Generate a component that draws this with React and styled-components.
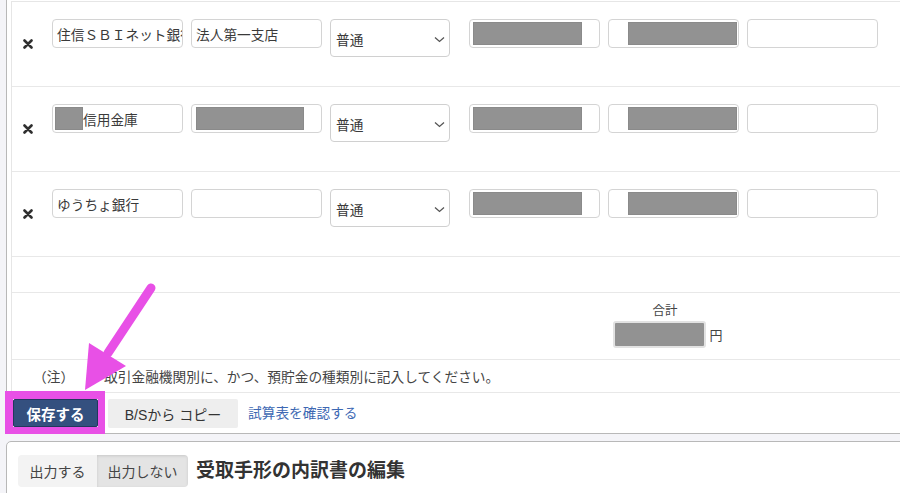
import styled, { createGlobalStyle } from "styled-components";

const GlobalStyle = createGlobalStyle`
  * { box-sizing: border-box; }
  html, body { margin: 0; padding: 0; }
  body {
    width: 900px;
    height: 493px;
    overflow: hidden;
    background: #f4f4f8;
    font-family: "Liberation Sans", "Noto Sans CJK JP", sans-serif;
    color: #333;
  }
`;

const Page = styled.div`
  position: relative;
  width: 1000px;
  padding-left: 6px;
`;

const Panel = styled.section`
  background: #fff;
  border: 1px solid #b8b8b8;
  border-top: none;
  border-radius: 0 0 4px 4px;
  padding: 1px 0 0 4px;
`;

const Table = styled.div`
  border-top: 1px solid #e6e6e6;
  border-left: 1px solid #e6e6e6;
`;

const Row = styled.div`
  display: flex;
  align-items: center;
  height: ${(p) => p.$h}px;
  border-bottom: 1px solid #e8e8e8;
`;

const XCell = styled.div`
  width: 32px;
  display: flex;
  justify-content: center;
  align-self: center;
`;

const Fields = styled.div`
  display: flex;
  align-items: flex-start;
  gap: 8px;
  align-self: flex-start;
  margin: 17px 0 0 8px;
`;

const Field = styled.div`
  width: ${(p) => p.$w || 131}px;
  height: 29px;
  flex-shrink: 0;
  display: flex;
  align-items: center;
  padding-left: ${(p) => (p.$pad ?? 4)}px;
  border: 1px solid #d4d4d4;
  border-radius: 4px;
  background: #fff;
  font-size: 13.7px;
  color: #3a3a3a;
  white-space: nowrap;
  overflow: hidden;
`;

const Redacted = styled.span`
  display: block;
  flex-shrink: 0;
  width: ${(p) => p.$w}px;
  height: 23px;
  background: #929292;
  box-shadow: inset 0 0 0 1px #8a8a8a;
`;

const Select = styled.div`
  width: 120px;
  height: 38px;
  margin-right: 11px;
  flex-shrink: 0;
  display: flex;
  align-items: center;
  justify-content: space-between;
  padding: 2px 4px 0 5px;
  border: 1px solid #d0d0d0;
  border-radius: 4px;
  background: #fff;
  font-size: 13.7px;
  color: #3a3a3a;
`;

const TotalCell = styled.div`
  width: 140px;
  margin-left: 586px;
  align-self: flex-start;
  padding-top: 10px;
  display: flex;
  flex-direction: column;
  align-items: center;
`;

const TotalLabel = styled.div`
  font-size: 12.5px;
  line-height: 16px;
  color: #444;
  margin-right: 6px;
`;

const TotalLine = styled.div`
  display: flex;
  align-items: center;
  gap: 3px;
  margin-top: 2px;
  font-size: 13px;
  color: #444;
`;

const TotalBox = styled.div`
  width: 93px;
  height: 27px;
  border: 2px solid #e2e2e2;
  border-radius: 3px;
  background: #929292;
`;

const NoteMark = styled.span`
  margin-left: 21px;
  font-size: 13.7px;
  color: #444;
`;

const NoteText = styled.span`
  margin-left: 30px;
  font-size: 13.7px;
  color: #444;
`;

const Actions = styled.div`
  height: 40px;
  display: flex;
  align-items: flex-start;
  gap: 10px;
  padding: 6px 0 0 2px;
`;

const SaveButton = styled.button`
  width: 85px;
  height: 28px;
  border: 1px solid #22385d;
  border-radius: 2px;
  background: #34507f;
  color: #fff;
  font: bold 14.5px "Liberation Sans", "Noto Sans CJK JP", sans-serif;
  padding: 0;
`;

const CopyButton = styled.button`
  width: 130px;
  height: 29px;
  border: none;
  border-radius: 2px;
  background: #eeeeee;
  color: #333;
  font: 14px "Liberation Sans", "Noto Sans CJK JP", sans-serif;
  padding: 0;
`;

const TextLink = styled.a`
  line-height: 29px;
  font-size: 13.7px;
  color: #3d68b3;
  text-decoration: none;
`;

const NextPanel = styled.section`
  margin-top: 7px;
  height: 90px;
  background: #fff;
  border: 1px solid #b8b8b8;
  border-radius: 5px;
  padding: 13px 0 0 11px;
  display: flex;
  align-items: flex-start;
`;

const Toggle = styled.div`
  display: flex;
  height: 32px;
  border-radius: 4px;
  overflow: hidden;
`;

const ToggleItem = styled.div`
  width: ${(p) => p.$w}px;
  display: flex;
  align-items: center;
  justify-content: center;
  font-size: 14px;
  color: #444;
  background: ${(p) => (p.$active ? "#e4e4e4" : "#f3f3f3")};
  box-shadow: ${(p) => (p.$active ? "inset 0 1px 3px rgba(0,0,0,0.12)" : "none")};
`;

const SectionTitle = styled.h2`
  margin: 0 0 0 8px;
  line-height: 32px;
  font-size: 19px;
  font-weight: bold;
  color: #333;
`;

const Overlay = styled.svg`
  position: absolute;
  left: 0;
  top: 0;
  pointer-events: none;
`;

const CrossIcon = () => (
  <svg width="10" height="10" viewBox="0 0 10 10">
    <path d="M1.5 1.5 L8.5 8.5 M8.5 1.5 L1.5 8.5" stroke="#2f2f2f" strokeWidth="2.6" strokeLinecap="round" />
  </svg>
);

const Chevron = () => (
  <svg width="11" height="7" viewBox="0 0 11 7">
    <path d="M1 1.5 L5.5 5.5 L10 1.5" fill="none" stroke="#555" strokeWidth="1.3" />
  </svg>
);

const banks = [
  { name: "住信ＳＢＩネット銀行", branch: "法人第一支店" },
  { name: "信用金庫", nameRedact: 28, branchRedact: 108 },
  { name: "ゆうちょ銀行", branch: "" },
];

const BankRow = ({ bank }) => (
  <Row $h={85}>
    <XCell>
      <CrossIcon />
    </XCell>
    <Fields>
      <Field $pad={bank.nameRedact ? 2 : 4}>
        {bank.nameRedact && <Redacted $w={bank.nameRedact} />}
        {bank.name}
      </Field>
      <Field>
        {bank.branchRedact ? <Redacted $w={bank.branchRedact} /> : bank.branch}
      </Field>
      <Select>
        普通
        <Chevron />
      </Select>
      <Field $pad={3}>
        <Redacted $w={109} />
      </Field>
      <Field $pad={19}>
        <Redacted $w={109} />
      </Field>
      <Field />
    </Fields>
  </Row>
);

export default function App() {
  return (
    <>
      <GlobalStyle />
      <Page>
        <Panel>
          <Table>
            {banks.map((b, i) => (
              <BankRow key={i} bank={b} />
            ))}
            <Row $h={36} />
            <Row $h={67}>
              <TotalCell>
                <TotalLabel>合計</TotalLabel>
                <TotalLine>
                  <TotalBox />円
                </TotalLine>
              </TotalCell>
            </Row>
            <Row $h={33}>
              <NoteMark>（注）</NoteMark>
              <NoteText>取引金融機関別に、かつ、預貯金の種類別に記入してください。</NoteText>
            </Row>
          </Table>
          <Actions>
            <SaveButton>保存する</SaveButton>
            <CopyButton>B/Sから コピー</CopyButton>
            <TextLink href="#">試算表を確認する</TextLink>
          </Actions>
        </Panel>
        <NextPanel>
          <Toggle>
            <ToggleItem $w={79}>出力する</ToggleItem>
            <ToggleItem $w={91} $active>出力しない</ToggleItem>
          </Toggle>
          <SectionTitle>受取手形の内訳書の編集</SectionTitle>
        </NextPanel>
        <Overlay width="900" height="493" viewBox="0 0 900 493">
          <path
            d="M5 391 H105 V434 H5 Z M13 399 V427 H98 V399 Z"
            fill="#e850e6"
            fillRule="evenodd"
          />
          <line x1="151" y1="288" x2="108" y2="353" stroke="#e850e6" strokeWidth="9" strokeLinecap="round" />
          <polygon points="85,390 89,343 126,366" fill="#e850e6" />
        </Overlay>
      </Page>
    </>
  );
}
